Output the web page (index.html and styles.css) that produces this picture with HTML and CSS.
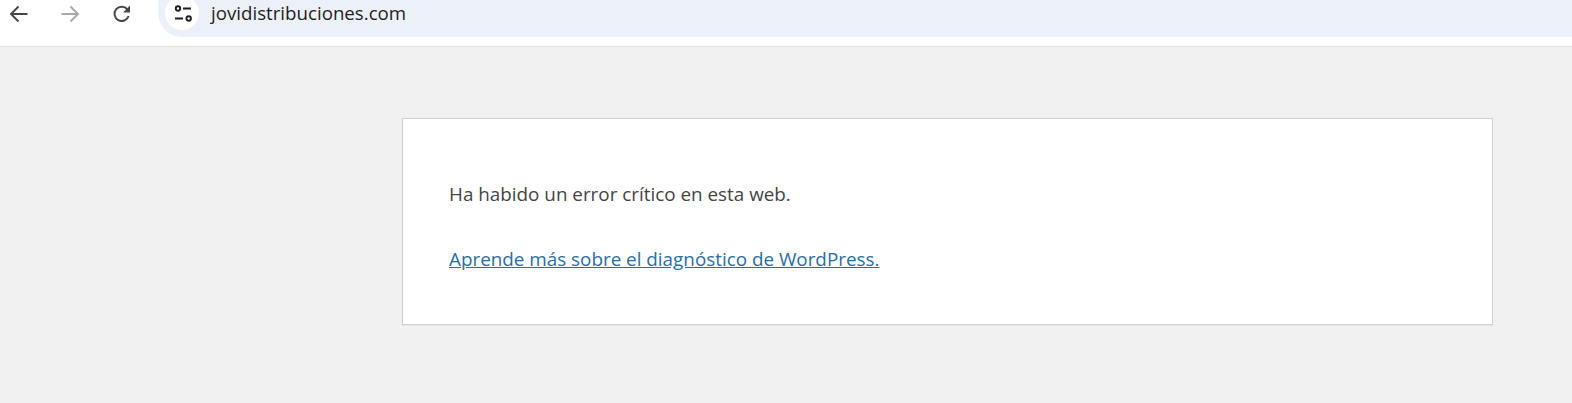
FILE: index.html
```html
<!DOCTYPE html>
<html>
<head>
    <title>jovidistribuciones.com</title>
    <link rel="stylesheet" href="styles.css">
</head>
<body>
    <div class="toolbar">
        <div class="nav-btn">
            <svg width="20" height="20" viewBox="0 0 20 20"><path d="M18.5 10H2M9.5 2.5L2 10l7.5 7.5" fill="none" stroke="#474747" stroke-width="1.9"/></svg>
        </div>
        <div class="nav-btn">
            <svg width="20" height="20" viewBox="0 0 20 20"><path d="M1.5 10H18M10.5 2.5L18 10l-7.5 7.5" fill="none" stroke="#a9a9a9" stroke-width="1.9"/></svg>
        </div>
        <div class="nav-btn">
            <svg width="20" height="20" viewBox="0 0 20 20"><path d="M16.6 12a7.2 7.2 0 1 1-1.2-6.6" fill="none" stroke="#474747" stroke-width="2"/><path d="M18 1.6v6.9h-6.9z" fill="#474747"/></svg>
        </div>
        <div class="omnibox">
            <div class="site-info">
                <svg width="20" height="20" viewBox="0 0 20 20" fill="none" stroke="#1f1f1f" stroke-width="1.9"><circle cx="6" cy="5.5" r="2.2"/><path d="M11 5.5h8M3 15.5h8"/><circle cx="16.7" cy="15.5" r="2.2"/></svg>
            </div>
            <span class="url">jovidistribuciones.com</span>
        </div>
    </div>

    <div class="page">
        <div class="error-box">
            <p>Ha habido un error crítico en esta web.</p>
            <p><a href="#">Aprende más sobre el diagnóstico de WordPress.</a></p>
        </div>
    </div>
</body>
</html>
```

FILE: styles.css
```css
html, body {
    margin: 0;
    height: 100%;
}
body {
    font-family: "Open Sans", "Noto Sans", sans-serif;
    background: #f1f1f1;
    overflow: hidden;
}
.toolbar {
    display: flex;
    align-items: flex-start;
    height: 46px;
    background: white;
    border-bottom: 1px solid #e2e2e0;
    gap: 14.5px;
}
.nav-btn {
    width: 37px;
    height: 28px;
    display: flex;
    align-items: center;
    justify-content: center;
}
.omnibox {
    flex: 1;
    height: 37px;
    margin-left: 3.5px;
    padding-left: 7px;
    display: flex;
    align-items: flex-start;
    overflow: hidden;
    background: #ecf0f8;
    border-bottom-left-radius: 24px;
}
.site-info {
    width: 34px;
    height: 34px;
    margin-top: -4px;
    border-radius: 50%;
    background: white;
    display: flex;
    align-items: center;
    justify-content: center;
}
.url {
    margin-left: 12px;
    font-size: 18.7px;
    line-height: 26px;
    color: #1f1f1f;
}
.page {
    padding: 71px 79px 0 402px;
}
.error-box {
    height: 207px;
    box-sizing: border-box;
    background: white;
    border: 1px solid #cfcfcf;
    box-shadow: 0 1px 1px rgba(0,0,0,.04);
    padding: 57px 46px 0;
    font-size: 18.85px;
    line-height: 36px;
    color: #444;
}
.error-box p {
    margin: 0 0 29px;
}
.error-box a {
    color: #2a6ea5;
}
```
